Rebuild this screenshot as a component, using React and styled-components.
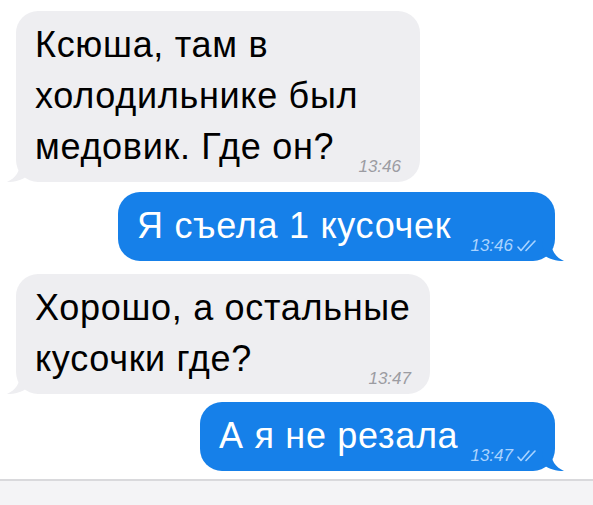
import React from "react";
import styled, { createGlobalStyle } from "styled-components";

const Global = createGlobalStyle`
  html, body { margin: 0; padding: 0; background: #ffffff; }
  body { font-family: "Liberation Sans", Arial, sans-serif; }
`;

const Screen = styled.div`
  width: 593px;
  height: 505px;
  display: flex;
  flex-direction: column;
  overflow: hidden;
  background: #ffffff;
`;

const Thread = styled.div`
  display: flex;
  flex-direction: column;
  padding: 11px 0 0 0;
  flex: 1;
`;

const Row = styled.div`
  display: flex;
  justify-content: ${(p) => (p.$out ? "flex-end" : "flex-start")};
  padding: ${(p) => (p.$out ? "0 38px 0 0" : "0 0 0 16px")};
  margin-top: ${(p) => p.$gap || 0}px;
`;

const Bubble = styled.div`
  position: relative;
  width: ${(p) => p.$width}px;
  box-sizing: border-box;
  display: grid;
  padding: 8px ${(p) => (p.$out ? 15 : 19)}px 10px 19px;
  border-radius: 22px;
  background: ${(p) => (p.$out ? "#1680e9" : "#eeeef1")};
  color: ${(p) => (p.$out ? "#ffffff" : "#000000")};
`;

const Text = styled.div`
  grid-area: 1 / 1;
  justify-self: start;
  font-size: 36px;
  line-height: 51px;
  letter-spacing: 0.7px;
  white-space: nowrap;
`;

const Meta = styled.div`
  grid-area: 1 / 1;
  justify-self: end;
  align-self: end;
  margin-bottom: -3px;
  display: flex;
  align-items: center;
  gap: 3px;
  font-size: 17px;
  line-height: 17px;
  font-style: italic;
  color: ${(p) => (p.$out ? "#a9d3ff" : "#9c9ca2")};
`;

const Tail = styled.svg`
  position: absolute;
  bottom: 0;
  ${(p) => (p.$out ? "right: -9px;" : "left: -9px;")}
  width: 22px;
  height: 20px;
`;

const Composer = styled.div`
  height: 24px;
  border-top: 2px solid #d9d9dc;
  background: #f4f4f6;
`;

function Checks() {
  return (
    <svg width="24" height="12" viewBox="0 0 24 12" fill="none">
      <path d="M2 7 L5 10.5 L13 1" stroke="#a9d3ff" strokeWidth="1.6" strokeLinecap="round" strokeLinejoin="round" />
      <path d="M10 10.5 L19 1" stroke="#a9d3ff" strokeWidth="1.6" strokeLinecap="round" />
    </svg>
  );
}

function BubbleTail({ out }) {
  const fill = out ? "#1680e9" : "#eeeef1";
  return (
    <Tail $out={out} viewBox="0 0 22 20">
      {out ? (
        <path d="M0 0 L9 0 C9 9 13 16 22 20 C14 20 7 18 2 14 Z" fill={fill} />
      ) : (
        <path d="M22 0 L13 0 C13 9 9 16 0 20 C8 20 15 18 20 14 Z" fill={fill} />
      )}
    </Tail>
  );
}

const messages = [
  { out: false, width: 404, gap: 0, lines: ["Ксюша, там в", "холодильнике был", "медовик. Где он?"], time: "13:46" },
  { out: true, width: 437, gap: 10, lines: ["Я съела 1 кусочек"], time: "13:46" },
  { out: false, width: 414, gap: 13, lines: ["Хорошо, а остальные", "кусочки где?"], time: "13:47" },
  { out: true, width: 355, gap: 8, lines: ["А я не резала"], time: "13:47" },
];

export default function App() {
  return (
    <Screen>
      <Global />
      <Thread>
        {messages.map((m, i) => (
          <Row key={i} $out={m.out} $gap={m.gap}>
            <Bubble $out={m.out} $width={m.width}>
              <Text>
                {m.lines.map((l, j) => (
                  <div key={j}>{l}</div>
                ))}
              </Text>
              <Meta $out={m.out}>
                <span>{m.time}</span>
                {m.out && <Checks />}
              </Meta>
              <BubbleTail out={m.out} />
            </Bubble>
          </Row>
        ))}
      </Thread>
      <Composer />
    </Screen>
  );
}
